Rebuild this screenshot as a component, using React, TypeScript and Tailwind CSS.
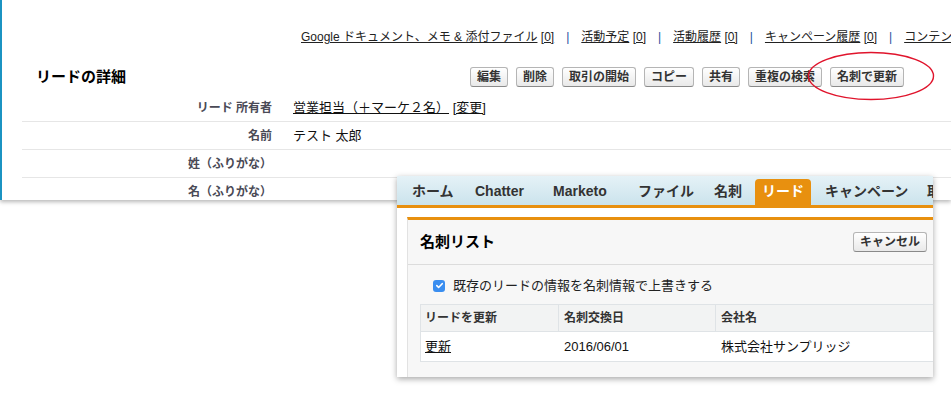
const FONT = "font-['Liberation_Sans','Noto_Sans_CJK_JP',sans-serif]"

const relatedLinks = [
  { label: 'Google ドキュメント、メモ & 添付ファイル', count: '[0]' },
  { label: '活動予定', count: '[0]' },
  { label: '活動履歴', count: '[0]' },
  { label: 'キャンペーン履歴', count: '[0]' },
  { label: 'コンテンツ', count: '[0]' },
]

const buttons = ['編集', '削除', '取引の開始', 'コピー', '共有', '重複の検索', '名刺で更新']

const tabs = [
  { label: 'ホーム', w: 'w-[63px]' },
  { label: 'Chatter', w: 'w-[78px]' },
  { label: 'Marketo', w: 'w-[85px]' },
  { label: 'ファイル', w: 'w-[76px]' },
  { label: '名刺', w: 'w-[41px]' },
]

function Btn({ label }: { label: string }) {
  return (
    <span className="flex h-[20px] items-center rounded-[3px] border border-[#b5b5b5] border-b-[#8a8a8a] bg-gradient-to-b from-white to-[#e9e9e9] px-[6px] text-[12px] leading-none font-bold text-[#333]">
      {label}
    </span>
  )
}

function DetailRow({ label, children }: { label: string; children?: React.ReactNode }) {
  return (
    <div className="flex h-[28px] shrink-0 items-center border-b border-[#e6e6e6]">
      <div className="w-[250px] text-right text-[12px] font-bold text-[#4a4a56]">{label}</div>
      <div className="ml-[21px] text-[13px] text-[#111]">{children}</div>
    </div>
  )
}

export default function App() {
  return (
    <div className={`relative h-[397px] w-[951px] overflow-hidden bg-white ${FONT}`}>
      {/* lead detail page behind */}
      <div className="flex h-[200px] flex-col overflow-hidden border-l-[2px] border-[#1b93c2] bg-white shadow-[0_2px_4px_rgba(0,0,0,0.28)]">
        <div className="mt-[29px] flex h-[16px] items-center pl-[299px] text-[12px] leading-[16px] whitespace-nowrap text-[#222]">
          {relatedLinks.map((l, i) => (
            <span key={l.label} className="flex items-center">
              {i > 0 && <span className="mx-[12px] text-[#1a4d9e]">|</span>}
              <span className="underline">{l.label}</span>
              {i < relatedLinks.length - 1 && (
                <>
                  <span>&nbsp;</span>
                  <span className="underline">{l.count}</span>
                </>
              )}
            </span>
          ))}
        </div>

        <div className="mt-[22px] flex h-[20px] items-center">
          <div className="w-[468px] pl-[34px] text-[15px] font-bold text-black">リードの詳細</div>
          <div className="flex gap-[8px]">
            {buttons.map((b) => (
              <Btn key={b} label={b} />
            ))}
          </div>
        </div>

        <div className="mt-[7px] ml-[20px] flex flex-col">
          <DetailRow label="リード 所有者">
            <span className="underline">営業担当（＋マーケ２名）</span>
            <span>&nbsp;</span>
            <span className="underline">[変更]</span>
          </DetailRow>
          <DetailRow label="名前">テスト 太郎</DetailRow>
          <DetailRow label="姓（ふりがな）" />
          <DetailRow label="名（ふりがな）" />
        </div>
      </div>

      {/* red mark around the button */}
      <svg className="absolute top-[51px] left-[807px]" width="128" height="50" viewBox="0 0 128 50">
        <ellipse cx="64" cy="25" rx="62.5" ry="23.5" fill="none" stroke="#e0142c" strokeWidth="1.4" />
      </svg>

      {/* business card popup */}
      <div className="absolute top-[176px] left-[397px] flex h-[201px] w-[536px] flex-col overflow-hidden bg-white shadow-[0_2px_6px_rgba(0,0,0,0.35)]">
        <div className="flex h-[29px] shrink-0 items-end bg-gradient-to-b from-[#e5f2f7] to-[#cbe3ec] pl-[15px] text-[14px] font-bold whitespace-nowrap text-[#333]">
          {tabs.map((t) => (
            <span key={t.label} className={`flex h-[26px] shrink-0 items-center pb-[1px] ${t.w}`}>
              {t.label}
            </span>
          ))}
          <span className="mr-[14px] flex h-[26px] w-[56px] shrink-0 items-center justify-center rounded-t-[4px] bg-[#e8900f] pb-[1px] text-white">
            リード
          </span>
          <span className="flex h-[26px] w-[102px] shrink-0 items-center pb-[1px]">キャンペーン</span>
          <span className="flex h-[26px] shrink-0 items-center pb-[1px]">取引先</span>
        </div>
        <div className="h-[3px] shrink-0 bg-[#e8900f]" />

        <div className="flex flex-1 flex-col pt-[9px] pl-[10px]">
          <div className="flex flex-1 flex-col border-t-[3px] border-l border-[#e8900f] border-l-[#e2e2e2] bg-[#f7f7f7]">
            <div className="flex h-[45px] shrink-0 items-center justify-between border-b border-[#dcdcdc] pr-[6px] pl-[12px]">
              <span className="text-[15px] font-bold text-black">名刺リスト</span>
              <Btn label="キャンセル" />
            </div>

            <div className="flex h-[39px] items-center pt-[10px] pb-[8px] pl-[25px]">
              <span className="flex h-[12px] w-[12px] items-center justify-center rounded-[3px] bg-[#3a8ef0]">
                <svg width="9" height="9" viewBox="0 0 10 10">
                  <path d="M2 5.2l2 2L8 3" fill="none" stroke="white" strokeWidth="1.8" strokeLinecap="round" strokeLinejoin="round" />
                </svg>
              </span>
              <span className="ml-[8px] text-[13px] text-[#222]">既存のリードの情報を名刺情報で上書きする</span>
            </div>

            <div className="ml-[12px] flex flex-col border border-r-0 border-[#dfe3e6] whitespace-nowrap">
              <div className="flex h-[27px] items-center border-b border-[#dfe3e6] bg-[#f2f3f3] text-[12px] font-bold text-[#333]">
                <span className="flex h-full w-[138px] items-center border-r border-[#dfe3e6] pl-[4px]">リードを更新</span>
                <span className="flex h-full w-[157px] items-center border-r border-[#dfe3e6] pl-[5px]">名刺交換日</span>
                <span className="pl-[5px]">会社名</span>
              </div>
              <div className="flex h-[29px] items-center bg-white text-[13px] text-[#111]">
                <span className="w-[138px] pl-[4px] underline">更新</span>
                <span className="w-[157px] pl-[5px]">2016/06/01</span>
                <span className="pl-[5px]">株式会社サンプリッジ</span>
              </div>
            </div>
          </div>
        </div>
      </div>
    </div>
  )
}
